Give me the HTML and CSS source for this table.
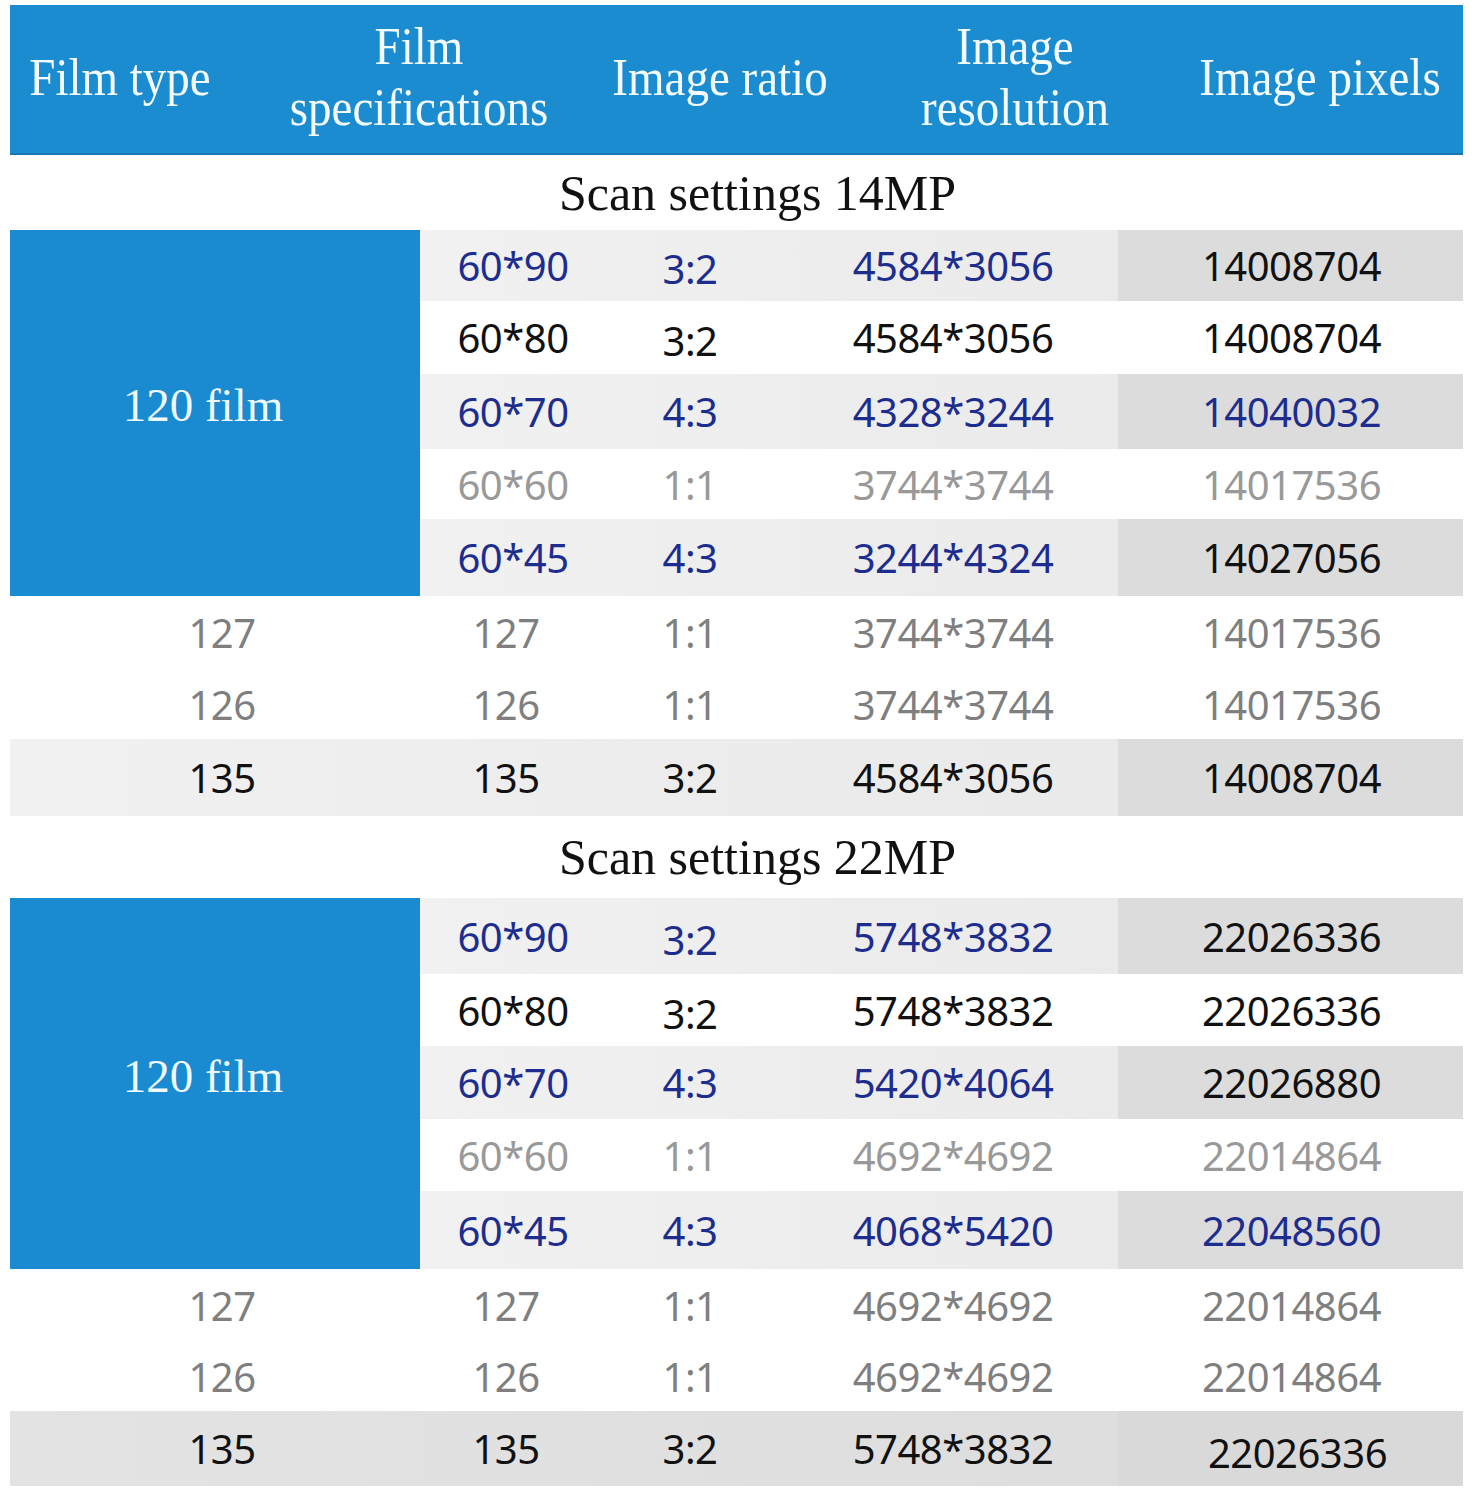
FILE: index.html
```html
<!DOCTYPE html>
<html lang="en">
<head>
<meta charset="utf-8">
<title>Scan settings</title>
<link rel="stylesheet" href="styles.css">
</head>
<body>
<div class="page">
  <div class="head">
    <div class="hc h1"><span>Film type</span></div>
    <div class="hc h2"><span>Film<br>specifications</span></div>
    <div class="hc h3"><span>Image ratio</span></div>
    <div class="hc h4"><span>Image<br>resolution</span></div>
    <div class="hc h5"><span>Image pixels</span></div>
  </div>

  <div class="title t1">Scan settings 14MP</div>
  <div class="table">
    <div class="group">
      <div class="film">120 film</div>
      <div class="subrows">
        <div class="row shade r1 blue"><div class="c2">60*90</div><div class="c3 low">3:2</div><div class="c4">4584*3056</div><div class="c5 dark black">14008704</div></div>
        <div class="row r2 black"><div class="c2">60*80</div><div class="c3 low">3:2</div><div class="c4">4584*3056</div><div class="c5">14008704</div></div>
        <div class="row shade r3 blue"><div class="c2">60*70</div><div class="c3">4:3</div><div class="c4">4328*3244</div><div class="c5 dark">14040032</div></div>
        <div class="row r4 gray light"><div class="c2">60*60</div><div class="c3">1:1</div><div class="c4">3744*3744</div><div class="c5">14017536</div></div>
        <div class="row shade r5 blue"><div class="c2">60*45</div><div class="c3">4:3</div><div class="c4">3244*4324</div><div class="c5 dark black">14027056</div></div>
      </div>
    </div>
    <div class="row full r6 gray"><div class="c1">127</div><div class="c2">127</div><div class="c3">1:1</div><div class="c4">3744*3744</div><div class="c5">14017536</div></div>
    <div class="row full r7 gray"><div class="c1">126</div><div class="c2">126</div><div class="c3">1:1</div><div class="c4">3744*3744</div><div class="c5">14017536</div></div>
    <div class="row full shade r8 black"><div class="c1">135</div><div class="c2">135</div><div class="c3">3:2</div><div class="c4">4584*3056</div><div class="c5 dark">14008704</div></div>
  </div>

  <div class="title t2">Scan settings 22MP</div>
  <div class="table">
    <div class="group">
      <div class="film">120 film</div>
      <div class="subrows">
        <div class="row shade r1b blue"><div class="c2">60*90</div><div class="c3 low">3:2</div><div class="c4">5748*3832</div><div class="c5 dark black">22026336</div></div>
        <div class="row r2b black"><div class="c2">60*80</div><div class="c3 low">3:2</div><div class="c4">5748*3832</div><div class="c5">22026336</div></div>
        <div class="row shade r3b blue"><div class="c2">60*70</div><div class="c3">4:3</div><div class="c4">5420*4064</div><div class="c5 dark black">22026880</div></div>
        <div class="row r4b gray light"><div class="c2">60*60</div><div class="c3">1:1</div><div class="c4">4692*4692</div><div class="c5">22014864</div></div>
        <div class="row shade r5b blue"><div class="c2">60*45</div><div class="c3">4:3</div><div class="c4">4068*5420</div><div class="c5 dark">22048560</div></div>
      </div>
    </div>
    <div class="row full r6b gray"><div class="c1">127</div><div class="c2">127</div><div class="c3">1:1</div><div class="c4">4692*4692</div><div class="c5">22014864</div></div>
    <div class="row full r7b gray"><div class="c1">126</div><div class="c2">126</div><div class="c3">1:1</div><div class="c4">4692*4692</div><div class="c5">22014864</div></div>
    <div class="row full shade2 r8b black"><div class="c1">135</div><div class="c2">135</div><div class="c3">3:2</div><div class="c4">5748*3832</div><div class="c5 dark2 last">22026336</div></div>
  </div>
</div>
</body>
</html>
```
FILE: styles.css
```css
html, body {
  margin: 0;
  padding: 0;
  background: #ffffff;
}

.page {
  width: 1453px;
  padding: 5px 14px 15px 10px;
}

/* header */
.head {
  display: flex;
  height: 150px;
  background: #1c8cd1;
  border-bottom: 2px solid #1777b3;
  box-sizing: border-box;
  color: #f4fbff;
  font-family: "Liberation Serif", "Times New Roman", serif;
  font-size: 47px;
  line-height: 55px;
}

.hc {
  display: flex;
  align-items: center;
  justify-content: center;
  text-align: center;
  padding-bottom: 4px;
}

.hc span {
  display: inline-block;
  transform: scaleY(1.12);
}

.h1 { width: 220px; }
.h2 { width: 378px; }
.h3 { width: 224px; }
.h4 { width: 366px; }
.h5 { width: 244px; }

/* section titles */
.title {
  display: flex;
  align-items: center;
  justify-content: center;
  font-family: "Liberation Serif", "Times New Roman", serif;
  font-size: 50px;
  color: #111111;
  padding-left: 42px;
}

.title.t1 { height: 75px; }
.title.t2 { height: 82px; }

/* data tables */
.table {
  display: flex;
  flex-direction: column;
  font-family: "Noto Sans", "Liberation Sans", sans-serif;
  font-size: 40px;
  letter-spacing: -0.5px;
}

.group {
  display: flex;
}

.film {
  width: 410px;
  flex: none;
  display: flex;
  align-items: center;
  justify-content: center;
  background: #1a8ad1;
  color: #eef8ff;
  font-family: "Liberation Serif", "Times New Roman", serif;
  font-size: 47px;
  letter-spacing: 0;
  padding-right: 24px;
  padding-bottom: 16px;
  box-sizing: border-box;
}

.subrows {
  display: flex;
  flex-direction: column;
  flex: 1;
}

.row {
  display: flex;
  align-items: stretch;
}

.row > div {
  display: flex;
  align-items: center;
  justify-content: center;
}

.c1 { width: 410px; padding-left: 14px; box-sizing: border-box; }
.c2 { width: 186px; }
.c3 { width: 168px; }
.c4 { width: 344px; padding-left: 14px; box-sizing: border-box; }
.c5 { width: 345px; padding-left: 2px; box-sizing: border-box; }

.full .c2 { padding-right: 14px; box-sizing: border-box; }

.low { padding-top: 6px; box-sizing: border-box; }

.shade {
  background: linear-gradient(90deg, #f1f1f1 0%, #ebebeb 60%, #e9e9e9 100%);
}

.shade2 {
  background: linear-gradient(90deg, #e3e3e3 0%, #dcdcdc 100%);
}

.dark { background: #dcdcdc; }
.dark2 { background: #d9d9d9; }
.last { padding-top: 8px; padding-left: 14px; }

.blue { color: #1d2d8f; }
.black { color: #111111; }
.gray { color: #7f7f7f; }
.gray.light { color: #999999; }

.c5.black { color: #111111; }

/* row heights, table 1 */
.r1 { height: 71px; }
.r2 { height: 73px; }
.r3 { height: 75px; }
.r4 { height: 70px; }
.r5 { height: 77px; }
.r6 { height: 73px; }
.r7 { height: 70px; }
.r8 { height: 77px; }

/* row heights, table 2 */
.r1b { height: 76px; }
.r2b { height: 72px; }
.r3b { height: 73px; }
.r4b { height: 72px; }
.r5b { height: 78px; }
.r6b { height: 72px; }
.r7b { height: 70px; }
.r8b { height: 75px; }
```
